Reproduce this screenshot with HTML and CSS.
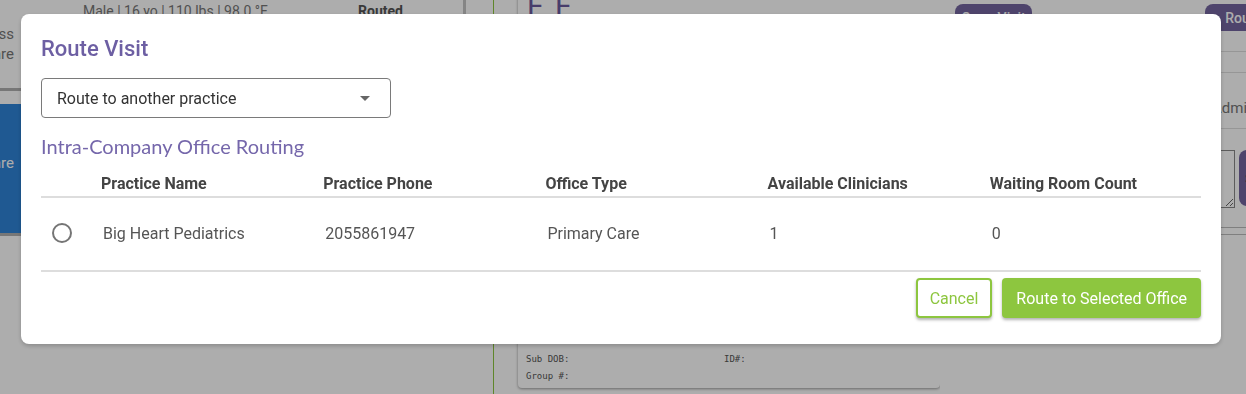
FILE: index.html
```html
<!DOCTYPE HTML>
<html lang="en">
<head>
  <meta charset="UTF-8">
  <meta name="viewport" content="width=device-width, initial-scale=1.0">
  <title>Route Visit</title>
  <link rel="stylesheet" href="styles.css">
</head>
<body>
  <!-- Page behind the dialog -->
  <div class="app">
    <div class="patients">
      <div class="patient-card">
        <div class="visit-type">
          <span>Wellness</span>
          <span>Routine Care</span>
        </div>
        <div class="patient-info">
          <span class="vitals">Male | 16 yo | 110 lbs | 98.0 &deg;F</span>
          <span class="status">Routed</span>
        </div>
      </div>
      <div class="patient-card selected">
        <div class="visit-type">
          <span>Primary Care</span>
        </div>
      </div>
    </div>
    <div class="gutter"></div>
    <div class="visit">
      <div class="visit-card">
        <div class="initials">F F</div>
        <div class="insurance">
          <span>Sub DOB:</span><span>ID#:</span>
          <span>Group #:</span><span></span>
        </div>
      </div>
    </div>
    <div class="side">
      <div class="side-actions">
        <button class="side-btn">Open Visit</button>
        <button class="side-btn">Route</button>
      </div>
      <div class="side-row"></div>
      <div class="side-row tall">Admin</div>
      <div class="note">
        <textarea class="note-box"></textarea>
        <button class="note-btn">Save</button>
      </div>
      <div class="side-row double"></div>
    </div>
  </div>

  <div class="overlay"></div>

  <!-- Route Visit dialog -->
  <div class="dialog">
    <h2 class="dialog-title">Route Visit</h2>
    <div class="select">
      <span>Route to another practice</span>
      <span class="caret"></span>
    </div>
    <h3 class="section-title">Intra-Company Office Routing</h3>
    <table class="offices">
      <colgroup>
        <col class="pick-col">
        <col><col><col><col><col>
      </colgroup>
      <thead>
        <tr>
          <th></th>
          <th>Practice Name</th>
          <th>Practice Phone</th>
          <th>Office Type</th>
          <th>Available Clinicians</th>
          <th>Waiting Room Count</th>
        </tr>
      </thead>
      <tbody>
        <tr>
          <td><span class="radio"></span></td>
          <td>Big Heart Pediatrics</td>
          <td>2055861947</td>
          <td>Primary Care</td>
          <td>1</td>
          <td>0</td>
        </tr>
      </tbody>
    </table>
    <div class="dialog-actions">
      <button class="btn btn-outline">Cancel</button>
      <button class="btn btn-primary">Route to Selected Office</button>
    </div>
  </div>
</body>
</html>
```

FILE: styles.css
```css
body {
  margin: 0;
  height: 394px;
  overflow: hidden;
  background: #fff;
  font-family: Roboto, 'Liberation Sans', sans-serif;
  color: #333;
}

/* ---- page behind the dialog ---- */
.app {
  display: flex;
  height: 394px;
}
.app > div {
  flex-shrink: 0;
  box-sizing: border-box;
}
.patients {
  width: 466px;
  background: #fff;
}
.patient-card {
  position: relative;
  height: 94px;
  margin-top: -6px;
  background: #fff;
  border-right: 3px solid #c4c4c4;
  border-bottom: 3px solid #b0b0b0;
}
.patient-card.selected {
  margin-top: 13px;
  height: 129px;
  background: #2e84d8;
  color: #fff;
  border-right: none;
}
.visit-type {
  width: 14px;
  display: flex;
  flex-direction: column;
  align-items: flex-end;
  white-space: nowrap;
  font-size: 15px;
  line-height: 20px;
  padding-top: 30px;
  color: #777;
}
.selected .visit-type {
  color: #fff;
  padding-top: 49px;
}
.patient-info {
  position: absolute;
  top: 9px;
  left: 83px;
  right: 60px;
  display: flex;
  justify-content: space-between;
  font-size: 14px;
  color: #777;
}
.status {
  font-weight: 700;
  color: #555;
}
.gutter {
  width: 28px;
  border-right: 1px solid #8dc63f;
}
.visit {
  width: 446px;
  padding-left: 24px;
}
.visit-card {
  width: 422px;
  height: 400px;
  margin-top: -12px;
  display: flex;
  flex-direction: column;
  justify-content: space-between;
  background: #fff;
  border-radius: 4px;
  box-shadow: 0 1px 3px rgba(0, 0, 0, 0.4);
}
.initials {
  padding-left: 9px;
  font-size: 30px;
  color: #6a5a9e;
  letter-spacing: 2px;
}
.insurance {
  display: grid;
  grid-template-columns: 198px 1fr;
  row-gap: 7px;
  padding: 0 8px 7px;
  font-family: 'DejaVu Sans Mono', monospace;
  font-size: 9px;
  color: #555;
}
.side {
  flex: 1;
  background: #fff;
  display: flex;
  flex-direction: column;
}
.side-actions {
  display: flex;
  gap: 173px;
  padding: 4px 0 0 15px;
}
.side-btn {
  flex-shrink: 0;
  width: 77px;
  height: 27px;
  padding: 0;
  border: none;
  border-radius: 8px;
  background: #74659f;
  color: #fff;
  font: 500 14px Roboto, sans-serif;
}
.side-row {
  height: 20px;
  margin-top: 20px;
  border-top: 1px solid #ddd;
  border-bottom: 1px solid #ddd;
}
.side-row.tall {
  height: 55px;
  margin-top: 0;
  border-top: none;
  line-height: 70px;
  font-size: 15px;
  color: #777;
  text-indent: 272px;
}
.note {
  display: flex;
  gap: 4px;
  margin: 21px 0 0 277px;
}
.note-box {
  width: 12px;
  height: 52px;
  border: 1px solid #888;
  resize: both;
}
.note-btn {
  width: 40px;
  height: 56px;
  border: none;
  border-radius: 8px;
  background: #74659f;
}
.side-row.double {
  height: 6px;
  margin-top: 19px;
  border-color: #bbb;
}

.overlay {
  position: fixed;
  inset: 0;
  background: rgba(0, 0, 0, 0.32);
}

/* ---- dialog ---- */
.dialog {
  position: fixed;
  left: 21px;
  top: 14px;
  width: 1160px;
  height: 290px;
  padding: 20px;
  background: #fff;
  border-radius: 8px;
  box-shadow: 0 2px 4px rgba(0, 0, 0, 0.2);
}
.dialog-title {
  margin: 0;
  font-size: 22px;
  font-weight: 500;
  line-height: 30px;
  color: #6d5fa3;
}
.select {
  width: 313px;
  height: 38px;
  margin-top: 14px;
  padding: 0 20px 0 15px;
  display: flex;
  align-items: center;
  justify-content: space-between;
  border: 1px solid #7a7a7a;
  border-radius: 4px;
  font-size: 16px;
  color: #333;
}
.caret {
  border-left: 5px solid transparent;
  border-right: 5px solid transparent;
  border-top: 5px solid #666;
}
.section-title {
  margin: 14px 0 0;
  font-family: Lato, 'Liberation Sans', sans-serif;
  font-size: 20px;
  font-weight: 400;
  line-height: 28px;
  color: #7567ab;
}
.offices {
  width: 100%;
  table-layout: fixed;
  border-collapse: collapse;
}
.pick-col {
  width: 49px;
}
.offices th {
  height: 34px;
  padding: 0 11px 2px;
  vertical-align: bottom;
  text-align: left;
  font-size: 16px;
  font-weight: 700;
  line-height: 20px;
  color: #444;
  border-bottom: 2px solid #ddd;
}
.offices td {
  height: 70px;
  padding: 0 0 2px 13px;
  font-size: 16px;
  color: #555;
  border-bottom: 2px solid #ddd;
}
.offices td:first-child {
  padding-left: 11px;
}
.radio {
  display: block;
  width: 16px;
  height: 16px;
  border: 2px solid #757575;
  border-radius: 50%;
}
.dialog-actions {
  display: flex;
  justify-content: flex-end;
  gap: 10px;
  margin-top: 6px;
}
.btn {
  height: 40px;
  padding: 0 14px;
  border-radius: 4px;
  font: 400 16px Roboto, sans-serif;
  cursor: pointer;
  box-shadow: 0 2px 3px rgba(0, 0, 0, 0.3);
}
.btn-outline {
  padding: 0 12px;
  background: #fff;
  border: 2px solid #8dc63f;
  color: #8dc63f;
}
.btn-primary {
  background: #8dc63f;
  border: none;
  color: #fff;
}
```
